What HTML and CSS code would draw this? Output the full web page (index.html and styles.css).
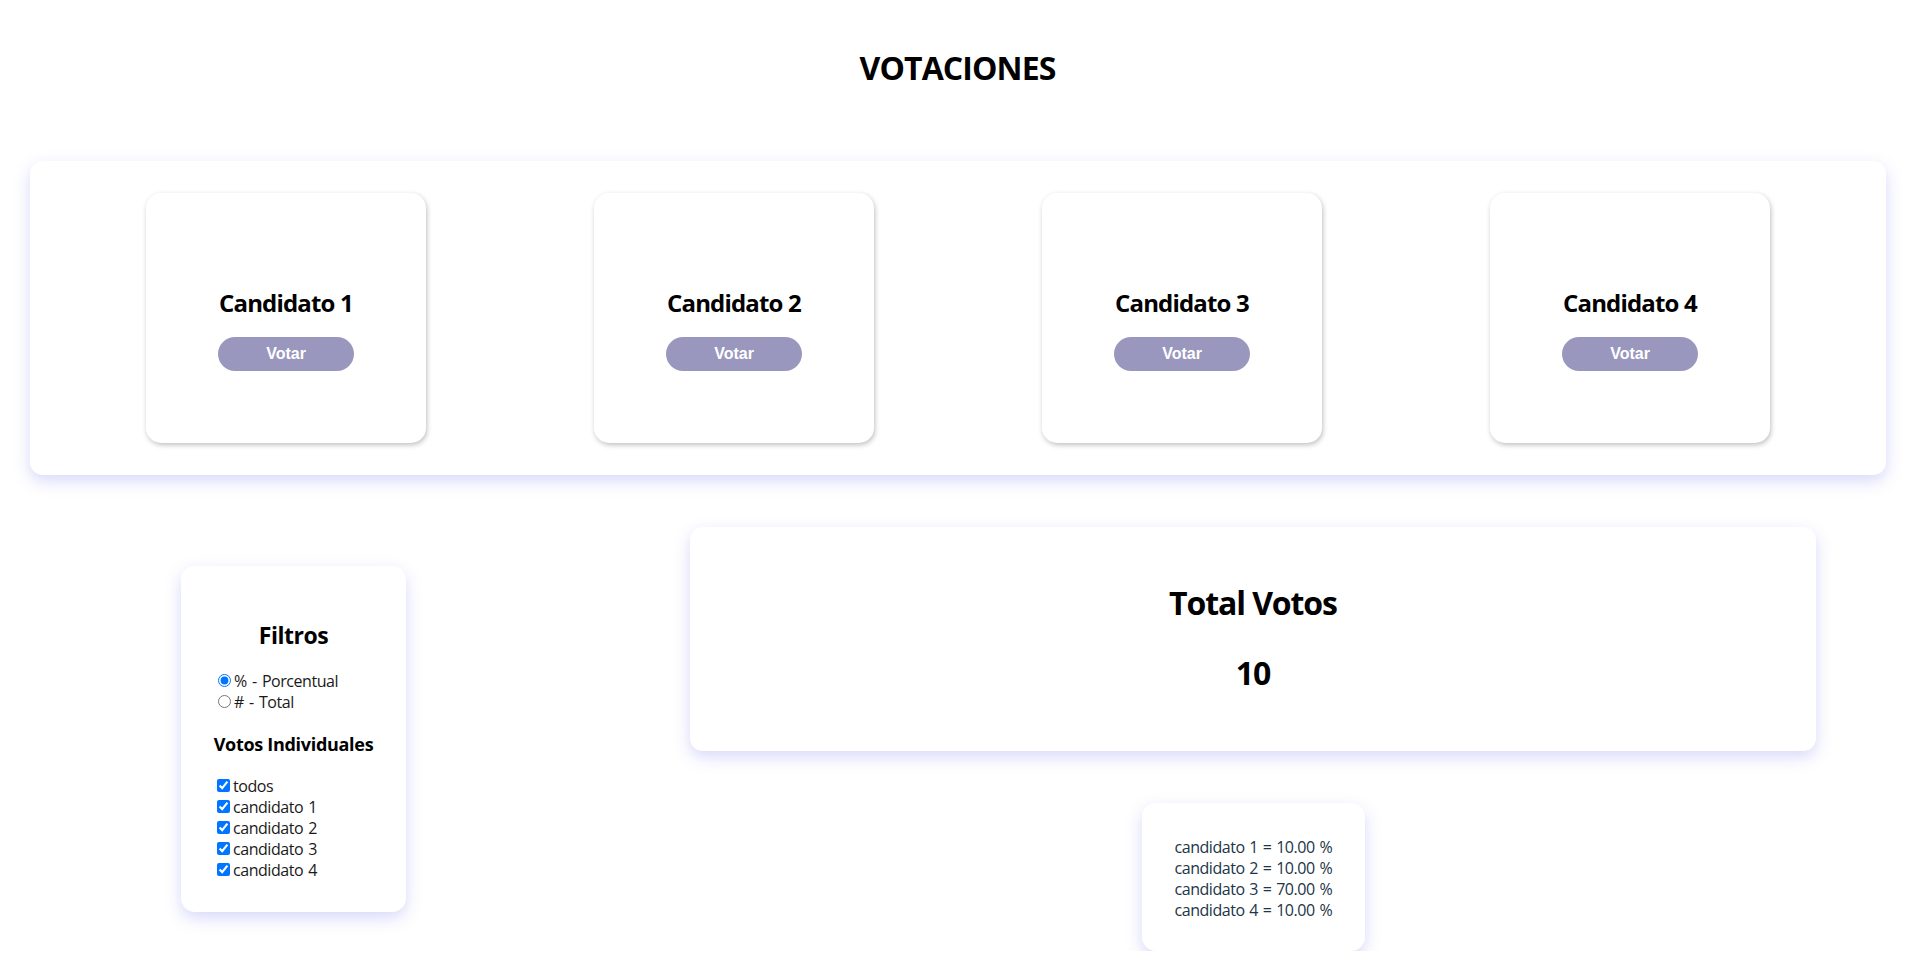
FILE: index.html
```html
<!DOCTYPE html>
<html lang="es">
<head>
<meta charset="utf-8">
<title>Votaciones</title>
<link rel="stylesheet" href="styles.css">
</head>
<body>
<h1 class="page-title">VOTACIONES</h1>

<section class="candidates">
  <div class="candidate-card">
    <h2 class="candidate-name">Candidato 1</h2>
    <button class="vote-btn">Votar</button>
  </div>
  <div class="candidate-card">
    <h2 class="candidate-name">Candidato 2</h2>
    <button class="vote-btn">Votar</button>
  </div>
  <div class="candidate-card">
    <h2 class="candidate-name">Candidato 3</h2>
    <button class="vote-btn">Votar</button>
  </div>
  <div class="candidate-card">
    <h2 class="candidate-name">Candidato 4</h2>
    <button class="vote-btn">Votar</button>
  </div>
</section>

<section class="bottom">
  <aside class="filters">
    <h2 class="filters-title">Filtros</h2>
    <div class="option-group first">
      <label class="option"><input type="radio" name="modo" checked>% - Porcentual</label>
      <label class="option"><input type="radio" name="modo"># - Total</label>
    </div>
    <h3 class="filters-sub">Votos Individuales</h3>
    <div class="option-group">
      <label class="option"><input type="checkbox" checked>todos</label>
      <label class="option"><input type="checkbox" checked>candidato 1</label>
      <label class="option"><input type="checkbox" checked>candidato 2</label>
      <label class="option"><input type="checkbox" checked>candidato 3</label>
      <label class="option"><input type="checkbox" checked>candidato 4</label>
    </div>
  </aside>

  <div class="results">
    <div class="total-card">
      <h1 class="total-title">Total Votos</h1>
      <h1 class="total-value">10</h1>
    </div>
    <div class="percent-card">
      <div class="percent-line">candidato 1 = 10.00 %</div>
      <div class="percent-line">candidato 2 = 10.00 %</div>
      <div class="percent-line">candidato 3 = 70.00 %</div>
      <div class="percent-line">candidato 4 = 10.00 %</div>
    </div>
  </div>
</section>
</body>
</html>
```
FILE: styles.css
```css
* { box-sizing: border-box; }

body {
  margin: 0;
  padding: 48px 0 0;
  background: #ffffff;
  color: #213547;
  font-family: "Open Sans", "Noto Sans", sans-serif;
}

h1, h2, h3 { margin: 0; color: #000; font-weight: 700; }

.page-title {
  text-align: center;
  font-size: 32px;
  line-height: 40px;
  letter-spacing: -0.9px;
}

.candidates {
  margin: 73px 29px 0 30px;
  height: 314px;
  padding: 32px;
  display: flex;
  justify-content: space-around;
  background: #fff;
  border-radius: 13px;
  box-shadow: 0 6px 16px rgba(105, 105, 235, 0.26);
}

.candidate-card {
  width: 280px;
  height: 250px;
  padding-top: 94px;
  display: flex;
  flex-direction: column;
  align-items: center;
  background: #fff;
  border-radius: 15px;
  box-shadow: 1px 2px 5px rgba(0, 0, 0, 0.25);
}

.candidate-name {
  font-size: 24px;
  line-height: 32px;
  letter-spacing: -0.82px;
}

.vote-btn {
  margin-top: 18px;
  width: 136px;
  height: 34px;
  border: none;
  border-radius: 17px;
  background: #9997bd;
  color: #fff;
  font-family: "Liberation Sans", Arial, sans-serif;
  font-weight: 700;
  font-size: 16px;
  padding: 0;
}

.bottom {
  margin-top: 52px;
  padding-left: 181px;
  display: flex;
  align-items: center;
  gap: 284px;
}

.filters {
  width: 225px;
  height: 346px;
  padding: 54px 32px 0;
  background: #fff;
  border-radius: 14px;
  box-shadow: 0 6px 16px rgba(105, 105, 235, 0.26);
}

.filters-title {
  text-align: center;
  font-size: 23px;
  line-height: 30px;
  letter-spacing: -0.5px;
}

.option-group {
  margin-top: 20px;
  display: flex;
  flex-direction: column;
}

.option-group.first { margin-top: 21px; }

.option {
  display: block;
  font-size: 16px;
  line-height: 21px;
  letter-spacing: -0.45px;
  word-spacing: 1.5px;
  color: #1a1a1a;
  white-space: nowrap;
}

.option input { letter-spacing: normal; }

.filters-sub {
  margin-top: 19px;
  text-align: center;
  font-size: 18px;
  line-height: 24px;
  letter-spacing: -0.3px;
  white-space: nowrap;
}

.results {
  width: 1126px;
  display: flex;
  flex-direction: column;
  align-items: center;
  gap: 52px;
}

.total-card {
  width: 100%;
  height: 224px;
  padding-top: 56px;
  display: flex;
  flex-direction: column;
  align-items: center;
  gap: 30px;
  background: #fff;
  border-radius: 13px;
  box-shadow: 0 6px 16px rgba(105, 105, 235, 0.26);
}

.total-title, .total-value {
  font-size: 32px;
  line-height: 40px;
  letter-spacing: -1.1px;
}

.percent-card {
  width: 223px;
  height: 148px;
  padding: 34px 0 0 33px;
  background: #fff;
  border-radius: 14px;
  box-shadow: 0 6px 16px rgba(105, 105, 235, 0.26);
}

.percent-line {
  font-size: 16px;
  line-height: 21px;
  letter-spacing: -0.45px;
  word-spacing: 1px;
  white-space: nowrap;
}
```
